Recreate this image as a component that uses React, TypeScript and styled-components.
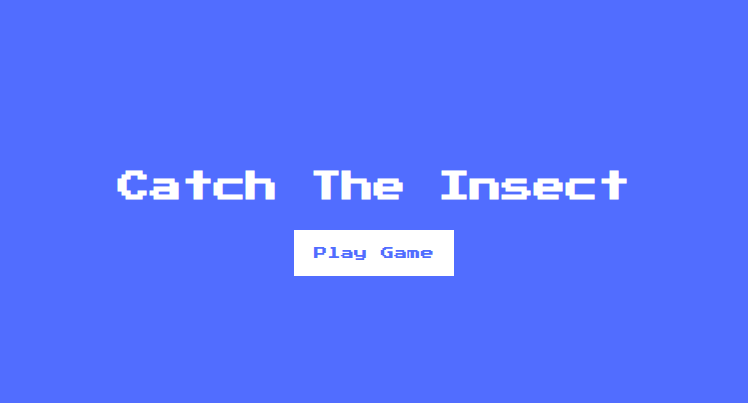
import React from "react";
import styled, { createGlobalStyle } from "styled-components";

const GlobalStyle = createGlobalStyle`
  * {
    box-sizing: border-box;
  }

  body {
    margin: 0;
    background: #516dff;
    font-family: "Press Start 2P", "DejaVu Sans Mono", monospace;
  }
`;

const Screen = styled.main`
  display: flex;
  flex-direction: column;
  align-items: center;
  justify-content: center;
  min-height: 100vh;
  padding-top: 44px;
  background: #516dff;
  color: #fff;
  text-align: center;
`;

const Title = styled.h1`
  margin: 0 0 27px;
  font-size: 32px;
  font-weight: 700;
  line-height: 32px;
`;

const PlayButton = styled.button`
  padding: 16px 20px 14px;
  border: 0;
  background: #fff;
  color: #516dff;
  font-family: inherit;
  line-height: 16px;
  cursor: pointer;
`;

export default function App() {
  return (
    <>
      <GlobalStyle />
      <Screen>
        <Title>Catch The Insect</Title>
        <PlayButton type="button">Play Game</PlayButton>
      </Screen>
    </>
  );
}
